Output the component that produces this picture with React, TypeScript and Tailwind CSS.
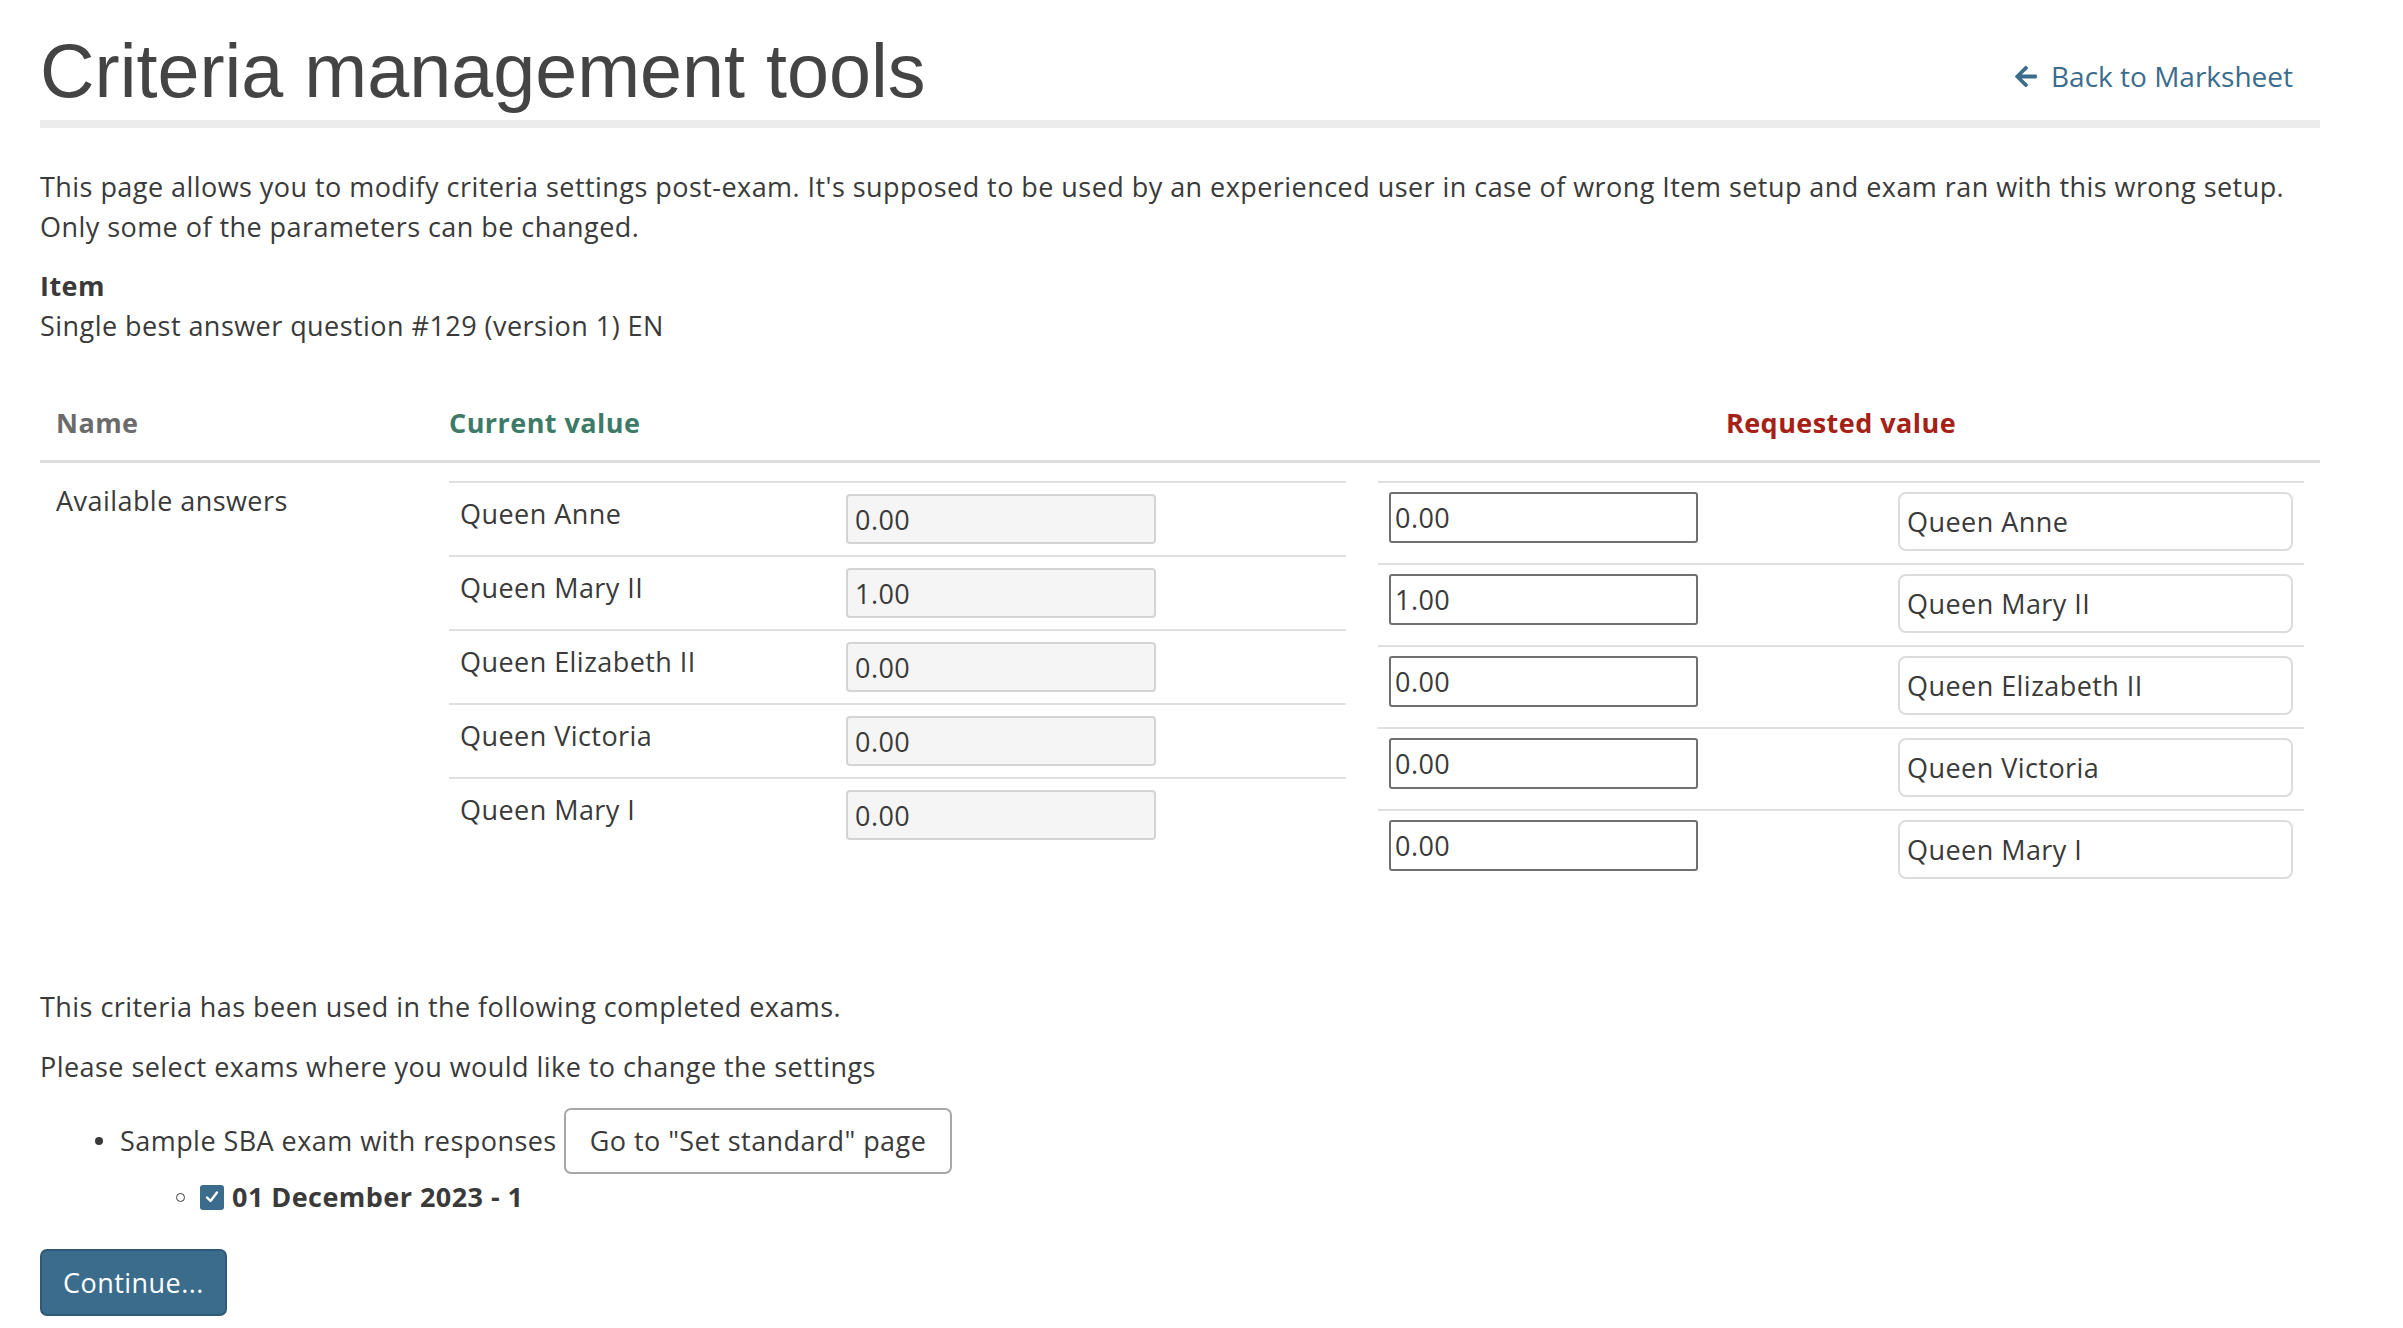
import React from "react";

const answers = [
  { name: "Queen Anne", cur: "0.00", req: "0.00" },
  { name: "Queen Mary II", cur: "1.00", req: "1.00" },
  { name: "Queen Elizabeth II", cur: "0.00", req: "0.00" },
  { name: "Queen Victoria", cur: "0.00", req: "0.00" },
  { name: "Queen Mary I", cur: "0.00", req: "0.00" },
];

const body = { fontFamily: "'Open Sans', 'Noto Sans', sans-serif", letterSpacing: "0.45px" };

export default function App() {
  return (
    <div className="min-h-screen bg-white text-[#3a3a3a]" style={body}>
      <div className="ml-[40px] w-[2280px] text-[27px] leading-[40px]">
        {/* Header */}
        <div className="flex justify-between items-start border-b-[8px] border-[#ececec] pb-[4px]">
          <h1
            className="mt-[26px] text-[75.5px] leading-[90px] font-normal text-[#444444] tracking-normal"
            style={{ fontFamily: "'Liberation Sans', Arial, sans-serif" }}
          >
            Criteria management tools
          </h1>
          <a className="mt-[56px] mr-[27px] flex items-center gap-[14px] text-[#3b6c8c] text-[28px] tracking-normal" href="#">
            <svg width="22" height="25" viewBox="0 0 448 512" fill="#3b6c8c">
              <path d="M257.5 445.1l-22.2 22.2c-9.4 9.4-24.6 9.4-33.9 0L7 273c-9.4-9.4-9.4-24.6 0-33.9L201.4 44.7c9.4-9.4 24.6-9.4 33.9 0l22.2 22.2c9.5 9.5 9.3 25-.4 34.3L136.6 216H424c13.3 0 24 10.7 24 24v32c0 13.3-10.7 24-24 24H136.6l120.5 114.8c9.8 9.3 10 24.8.4 34.3z" />
            </svg>
            <span>Back to Marksheet</span>
          </a>
        </div>

        {/* Intro */}
        <p className="mt-[39px]">
          This page allows you to modify criteria settings post-exam. It's supposed to be used by an experienced user in case of wrong Item setup and exam ran with this wrong setup. Only some of the parameters can be changed.
        </p>
        <div className="mt-[19px]">
          <div className="font-bold">Item</div>
          <div>Single best answer question #129 (version 1) EN</div>
        </div>

        {/* Table */}
        <div className="mt-[41px]">
          <div className="grid grid-cols-[393px_929px_958px] border-b-[3px] border-[#dddddd] font-bold">
            <div className="px-[16px] pt-[16px] pb-[17px] text-[#6b6b6b]">Name</div>
            <div className="px-[16px] pt-[16px] pb-[17px] text-[#3d7a68]">Current value</div>
            <div className="px-[16px] pt-[16px] pb-[17px] text-[#a52015] text-center">Requested value</div>
          </div>
          <div className="grid grid-cols-[393px_929px_958px]">
            <div className="px-[16px] pt-[18px]">Available answers</div>
            <div className="px-[16px] pt-[18px] pb-[16px]">
              {answers.map((a) => (
                <div key={a.name} className="flex items-start border-t-2 border-[#e0e0e0] pt-[11px] pb-[11px]">
                  <div className="w-[397px] pl-[11px]">{a.name}</div>
                  <input
                    readOnly
                    value={a.cur}
                    className="w-[310px] h-[50px] bg-[#f5f5f5] border-2 border-[#d4d4d4] rounded-[4px] px-[7px] text-[27px] text-[#3a3a3a] outline-none"
                    style={body}
                  />
                </div>
              ))}
            </div>
            <div className="px-[16px] pt-[18px] pb-[16px]">
              {answers.map((a) => (
                <div key={a.name} className="flex items-start justify-between border-t-2 border-[#e0e0e0] pt-[9px] pb-[12px] px-[11px]">
                  <input
                    readOnly
                    value={a.req}
                    className="w-[309px] h-[51px] bg-white border-2 border-[#707070] rounded-[3px] px-[4px] text-[27px] text-[#3a3a3a] outline-none"
                    style={body}
                  />
                  <input
                    readOnly
                    value={a.name}
                    className="w-[395px] h-[59px] bg-white border-2 border-[#dcdcdc] rounded-[8px] px-[7px] text-[27px] text-[#3a3a3a] outline-none"
                    style={body}
                  />
                </div>
              ))}
            </div>
          </div>
        </div>

        {/* Exams */}
        <p className="mt-[80px]">This criteria has been used in the following completed exams.</p>
        <p className="mt-[20px]">Please select exams where you would like to change the settings</p>

        <div className="mt-[21px]">
          <div className="flex items-baseline">
            <span className="w-[80px] flex justify-end pr-[17px] self-center">
              <span className="block w-[8px] h-[8px] rounded-full bg-[#3a3a3a]" />
            </span>
            <span>Sample SBA exam with responses</span>
            <button
              className="ml-[7px] h-[66px] px-[24px] bg-white border-2 border-[#a8a8a8] rounded-[7px] text-[27px] text-[#3a3a3a]"
              style={body}
            >
              Go to "Set standard" page
            </button>
          </div>
          <div className="flex items-center mt-[3px] pl-[136px]">
            <span className="block w-[9px] h-[9px] rounded-full border border-[#3a3a3a] mr-[15px]" />
            <span className="w-[24px] h-[25px] rounded-[3px] bg-[#3b6c8c] flex items-center justify-center mr-[8px]">
              <svg width="16" height="16" viewBox="0 0 16 16">
                <path d="M3 8.5 L6.5 12 L13 3.5" stroke="white" strokeWidth="2.4" fill="none" strokeLinecap="round" strokeLinejoin="round" />
              </svg>
            </span>
            <span className="font-bold">01 December 2023 - 1</span>
          </div>
        </div>

        <button
          className="mt-[32px] h-[67px] px-[21px] bg-[#3b6c8c] border-2 border-[#2f5a77] rounded-[7px] text-white text-[27px]"
          style={body}
        >
          Continue...
        </button>
      </div>
    </div>
  );
}
